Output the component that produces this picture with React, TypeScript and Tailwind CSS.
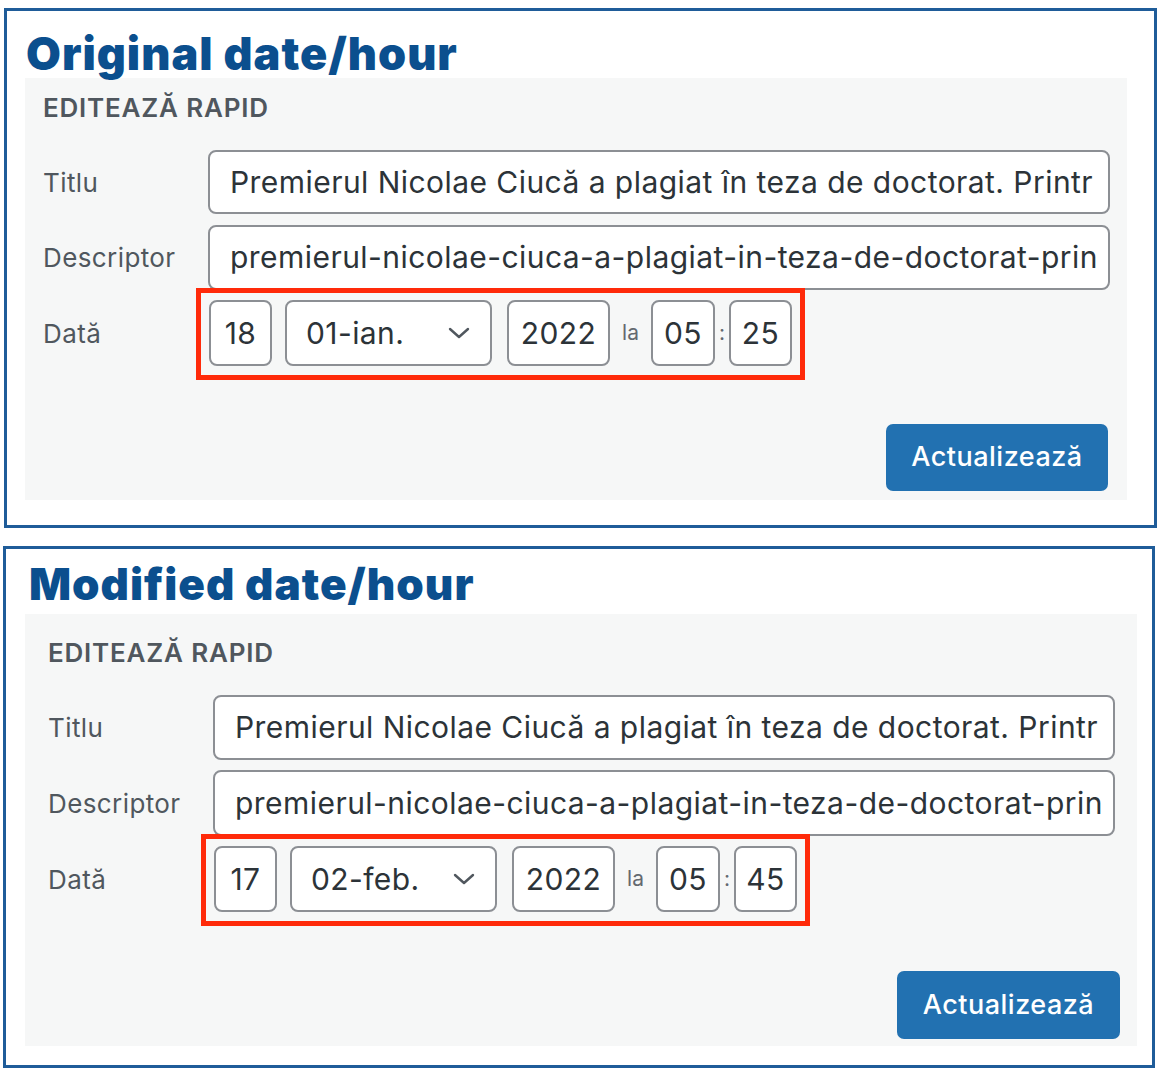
import React from "react";

const UI = { fontFamily: "Inter, 'Noto Sans', sans-serif" };

function Chevron() {
  return (
    <svg width="22" height="12" viewBox="0 0 22 12" fill="none">
      <path d="M2 2 L11 10 L20 2" stroke="#50575e" strokeWidth="2.4" strokeLinecap="round" strokeLinejoin="round" />
    </svg>
  );
}

interface DateValues {
  day: string;
  month: string;
  year: string;
  hour: string;
  minute: string;
}

function Field({ label, value, h, mt }: { label: string; value: string; h: string; mt: string }) {
  return (
    <div className={`flex items-center ${mt}`}>
      <div className="w-[165px] shrink-0 text-[26px] text-[#50575e] tracking-[0.4px]">{label}</div>
      <div className={`flex-1 ${h} bg-white border-2 border-[#8c8f94] rounded-[8px] flex items-center pl-[20px] overflow-hidden whitespace-nowrap text-[30px] tracking-[0.45px] text-[#2c3338]`}>
        {value}
      </div>
    </div>
  );
}

function DateRow({ d, h }: { d: DateValues; h: string }) {
  const box = `${h} bg-white border-2 border-[#8c8f94] rounded-[8px] flex items-center text-[30px] tracking-[0.4px] text-[#2c3338]`;
  return (
    <div className="relative flex items-center ml-px">
      <div className={`${box} w-[63px] justify-center`}>{d.day}</div>
      <div className={`${box} w-[207px] ml-[13px] pl-[19px] pr-[20px] justify-between`}>
        <span>{d.month}</span>
        <Chevron />
      </div>
      <div className={`${box} w-[103px] ml-[15px] justify-center`}>{d.year}</div>
      <div className="w-[41px] text-center text-[21px] text-[#646970]">la</div>
      <div className={`${box} w-[64px] justify-center`}>{d.hour}</div>
      <div className="w-[14px] text-center text-[21px] text-[#646970]">:</div>
      <div className={`${box} w-[63px] justify-center`}>{d.minute}</div>
      {/* annotation frame */}
      <div className="absolute left-[-13px] top-[-12px] w-[609px] h-[92px] border-[5px] border-[#ff2a0a] pointer-events-none" />
    </div>
  );
}

const TITLE = "Premierul Nicolae Ciucă a plagiat în teza de doctorat. Printr";
const SLUG = "premierul-nicolae-ciuca-a-plagiat-in-teza-de-doctorat-prin";

export default function App() {
  return (
    <div className="w-[1161px] h-[1072px] bg-white overflow-hidden" style={UI}>
      {/* original */}
      <div className="mt-[8px] ml-[4px] w-[1153px] h-[520px] border-[3px] border-[#1f5c99]">
        <div className="h-[67px] pl-[19px] pt-[20px]">
          <h1 className="text-[45px] leading-[45px] font-black text-[#0b4f8e] tracking-[1px]">Original date/hour</h1>
        </div>
        <div className="ml-[18px] w-[1102px] h-[422px] bg-[#f6f7f7] pl-[18px] pr-[17px] pt-[17px] flex flex-col">
          <div className="text-[26px] leading-[26px] font-semibold text-[#50575e] tracking-[0.8px]">EDITEAZĂ RAPID</div>
          <Field mt="mt-[29px]" h="h-[64px]" label="Titlu" value={TITLE} />
          <Field mt="mt-[11px]" h="h-[65px]" label="Descriptor" value={SLUG} />
          <div className="flex items-center mt-[10px]">
            <div className="w-[165px] shrink-0 text-[26px] text-[#50575e] tracking-[0.4px]">Dată</div>
            <DateRow h="h-[66px]" d={{ day: "18", month: "01-ian.", year: "2022", hour: "05", minute: "25" }} />
          </div>
          <div className="mt-[58px] flex justify-end pr-[2px]">
            <button className="w-[222px] h-[67px] rounded-[7px] bg-[#2271b1] text-white text-[27px] tracking-[0.5px] font-medium">
              Actualizează
            </button>
          </div>
        </div>
      </div>

      {/* modified */}
      <div className="mt-[18px] ml-[3px] w-[1152px] h-[522px] border-[3px] border-[#1f5c99]">
        <div className="h-[65px] pl-[23px] pt-[13px]">
          <h1 className="text-[44px] leading-[44px] font-black text-[#0b4f8e] tracking-[1px]">Modified date/hour</h1>
        </div>
        <div className="ml-[19px] w-[1112px] h-[432px] bg-[#f6f7f7] pl-[23px] pr-[22px] pt-[26px] flex flex-col">
          <div className="text-[26px] leading-[26px] font-semibold text-[#50575e] tracking-[0.8px]">EDITEAZĂ RAPID</div>
          <Field mt="mt-[29px]" h="h-[65px]" label="Titlu" value={TITLE} />
          <Field mt="mt-[10px]" h="h-[66px]" label="Descriptor" value={SLUG} />
          <div className="flex items-center mt-[10px]">
            <div className="w-[165px] shrink-0 text-[26px] text-[#50575e] tracking-[0.4px]">Dată</div>
            <DateRow h="h-[66px]" d={{ day: "17", month: "02-feb.", year: "2022", hour: "05", minute: "45" }} />
          </div>
          <div className="mt-[59px] flex justify-end">
            <button className="w-[223px] h-[68px] mr-[-5px] rounded-[7px] bg-[#2271b1] text-white text-[27px] tracking-[0.5px] font-medium">
              Actualizează
            </button>
          </div>
        </div>
      </div>
    </div>
  );
}
